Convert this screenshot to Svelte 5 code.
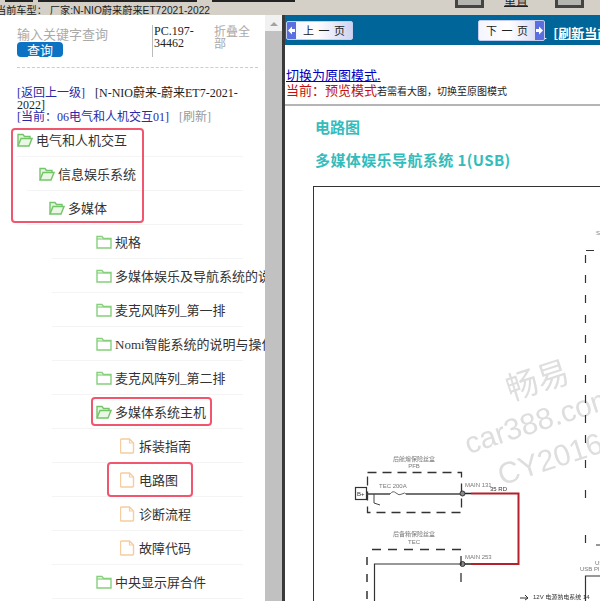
<script>
    const rows = [
        { name: "电气和人机交互", level: 1, icon: "open" },
        { name: "信息娱乐系统", level: 2, icon: "open" },
        { name: "多媒体", level: 3, icon: "open" },
        { name: "规格", level: 4, icon: "closed" },
        { name: "多媒体娱乐及导航系统的说明与操作", level: 4, icon: "closed" },
        { name: "麦克风阵列_第一排", level: 4, icon: "closed" },
        { name: "Nomi智能系统的说明与操作", level: 4, icon: "closed" },
        { name: "麦克风阵列_第二排", level: 4, icon: "closed" },
        { name: "多媒体系统主机", level: 4, icon: "open" },
        { name: "拆装指南", level: 5, icon: "doc" },
        { name: "电路图", level: 5, icon: "doc" },
        { name: "诊断流程", level: 5, icon: "doc" },
        { name: "故障代码", level: 5, icon: "doc" },
        { name: "中央显示屏合件", level: 4, icon: "closed" }
    ];

    // dash segments of the big box on the right of the diagram
    const dashes = [255, 275, 295, 315, 335, 355, 375, 395, 415, 435, 460, 490, 535];
</script>

<div class="page">
    <div class="topbar">
        <span class="tab t1"></span><span class="tab t2"></span><span class="tab t3"></span>
        <div class="carinfo">当前车型： 厂家:N-NIO蔚来蔚来ET72021-2022</div>
        <span class="tool b1"></span>
        <span class="tool-label">重置</span>
        <span class="tool b2"></span>
    </div>

    <div class="main">
        <aside class="side">
            <div class="search">
                <div class="search-left">
                    <div class="placeholder">输入关键字查询</div>
                    <button class="query">查询</button>
                </div>
                <div class="code">PC.197-34462</div>
                <div class="collapse">折叠全部</div>
            </div>

            <div class="crumbs">
                <span class="blue back">[返回上一级]</span>[N-NIO蔚来-蔚来ET7-2021-2022]<br />
                <span class="blue back">[当前：06电气和人机交互01]</span><span class="grey">[刷新]</span>
            </div>

            <ul class="tree">
                {#each rows as row}
                    <li class="row l{row.level}">
                        {#if row.icon === "doc"}
                            <svg class="ico" width="15" height="16" viewBox="0 0 15 16">
                                <path d="M1.500 1h8l4 4v9a1 1 0 0 1-1 1h-11a1 1 0 0 1-1-1v-12a1 1 0 0 1 1-1z" fill="#fff" stroke="#f5cd9e" stroke-width="1.400" />
                                <path d="M9.500 1v4h4" fill="none" stroke="#f5cd9e" stroke-width="1.200" />
                            </svg>
                        {:else if row.icon === "open"}
                            <svg class="ico" width="16" height="14" viewBox="0 0 16 14">
                                <path d="M1 12.500v-11h5l1.500 2h5.500v2" fill="#e6f5e0" stroke="#74c56a" stroke-width="1.400" />
                                <path d="M1 13h11l3-7.500h-11z" fill="#eaf7e4" stroke="#74c56a" stroke-width="1.400" />
                            </svg>
                        {:else}
                            <svg class="ico" width="16" height="14" viewBox="0 0 16 14">
                                <path d="M1 1.500h5l1.500 2h7.500v9.500h-14z" fill="#fff" stroke="#86d07c" stroke-width="1.400" />
                                <path d="M1 4h14" stroke="#86d07c" stroke-width="1.200" />
                            </svg>
                        {/if}
                        <span>{row.name}</span>
                    </li>
                {/each}
                <span class="mark m1"></span>
                <span class="mark m2"></span>
                <span class="mark m3"></span>
            </ul>
        </aside>

        <div class="scrollbar">
            <div class="arrow"></div>
            <div class="thumb"></div>
        </div>

        <section class="content">
            <nav class="pager">
                <div class="pgbtn prev">
                    <i class="cap"><svg width="7" height="9" viewBox="0 0 7 9"><path d="M0 4.500l4-4v2.500h3v3h-3v2.500z" fill="#fff" /></svg></i>
                    <b>上 一 页</b>
                </div>
                <div class="pgbtn next">
                    <b>下 一 页</b>
                    <i class="cap"><svg width="7" height="9" viewBox="0 0 7 9"><path d="M7 4.500l-4-4v2.500h-3v3h3v2.500z" fill="#fff" /></svg></i>
                </div>
                <a class="gap" href="#top">&nbsp;</a>
                <a class="refresh" href="#top">[刷新当前页面]</a>
            </nav>

            <div class="mode">
                <a class="switch" href="#top">切换为原图模式.</a>
                <div class="status"><span class="red">当前：预览模式</span><small>若需看大图，切换至原图模式</small></div>
            </div>

            <article class="doc">
                <h2>电路图</h2>
                <h3>多媒体娱乐导航系统 1(USB)</h3>
                <svg class="diagram" viewBox="313 186 287 415" width="287" height="415">
                    <rect x="313.500" y="186.500" width="400" height="500" fill="#fff" stroke="#333" />

                    <g class="soft">
                        <g class="wm" transform="rotate(-18 530 380)">
                            <text x="505" y="394" font-size="32">畅易</text>
                        </g>
                        <g class="wm" transform="rotate(-18 530 430)">
                            <text x="464" y="434" font-size="30">car388.com</text>
                            <text x="486" y="474" font-size="30">CY2016</text>
                        </g>

                        <text class="tiny c" x="414" y="461">后舱熔保险丝盒</text>
                        <text class="tiny c" x="414" y="468">PFB</text>
                        <text class="tiny" x="379" y="488">TEC 200A</text>
                        <text class="tiny" x="465" y="487">MAIN 131</text>
                        <text class="tiny dark" x="490" y="491">35 RD</text>
                        <text class="tiny c" x="414" y="536">后备箱保险丝盒</text>
                        <text class="tiny c" x="414" y="544">TEC</text>
                        <text class="tiny" x="465" y="559">MAIN 253</text>
                        <text class="tiny dark" x="533" y="599">12V 电源熟电系统 14</text>
                        <text class="tiny" x="596" y="235">S</text>
                        <text class="tiny" x="595" y="565">US</text>
                        <text class="tiny" x="580" y="571">USB Pl</text>

                        <rect x="367.500" y="472.500" width="94" height="40" fill="none" stroke="#333" stroke-width="1.300" stroke-dasharray="9 6" />
                        <rect x="355.500" y="487.500" width="11" height="12" fill="#fff" stroke="#333" stroke-width="1.200" />
                        <text class="tiny dark" x="357" y="496">B+</text>
                        <path d="M366 494h24M406 494h55" stroke="#444" stroke-width="1.300" fill="none" />
                        <path d="M390 494q3 -4 6 -1t6 1t4 0" stroke="#666" fill="none" />
                        <path d="M374 494v9l6 2" stroke="#444" fill="none" />
                        <circle cx="462.500" cy="493.500" r="2.500" fill="#888" stroke="#333" />
                        <circle cx="462.500" cy="564" r="2.500" fill="#888" stroke="#333" />
                        <path d="M465 493.500h6M465 564h6" stroke="#222" stroke-width="1.500" />
                        <path d="M471 493.500h47.500v70.500h-47.500" fill="none" stroke="#b3222c" stroke-width="2" />

                        <path d="M372 549.500h90" stroke="#333" stroke-width="1.300" stroke-dasharray="9 7" />
                        <path d="M367 557v44" stroke="#333" stroke-width="1.500" stroke-dasharray="8 9" />
                        <path d="M461 556v34" stroke="#333" stroke-width="1.300" stroke-dasharray="9 8" />
                        <path d="M461 564h-86.500v40" stroke="#333" stroke-width="1.200" fill="none" />

                        {#each dashes as y}
                            <path d="M585.500 {y}v8" stroke="#333" stroke-width="1.200" />
                        {/each}
                        <path d="M586 250.500h8M596 545h6" stroke="#333" stroke-width="1.200" />
                        <path d="M585.500 601v-25h20" stroke="#333" stroke-width="1.200" fill="none" />
                        <path d="M520 598h8l-3 -3M528 598l-3 2" stroke="#333" fill="none" />
                    </g>
                </svg>
            </article>
        </section>
    </div>
</div>

<style>
    :global(body) {
        margin: 0;
    }

    .page {
        width: 600px;
        height: 601px;
        overflow: hidden;
        background: #d4d0c8;
        display: flex;
        flex-direction: column;
        font-family: "Noto Sans CJK SC", sans-serif;
    }

    .topbar {
        position: relative;
        height: 15px;
        flex: none;
    }

    .carinfo {
        position: absolute;
        left: -4px;
        top: 5px;
        font: 10.2px/11px "Liberation Sans", "Noto Sans CJK SC", sans-serif;
        color: #222;
        white-space: nowrap;
    }

    .tab {
        position: absolute;
        top: 0;
        height: 2px;
        background: #222;
    }

    .t1 {
        left: 5px;
        width: 28px;
    }

    .t2 {
        left: 38px;
        width: 159px;
    }

    .t3 {
        left: 212px;
        width: 83px;
    }

    .tool {
        position: absolute;
        top: 0;
        width: 29px;
        height: 8px;
        background: #b5b5b0;
        border: 3px solid #444;
        border-top: 0;
        box-sizing: border-box;
    }

    .b1 {
        left: 455px;
    }

    .b2 {
        left: 555px;
    }

    .tool-label {
        position: absolute;
        left: 504px;
        top: -7px;
        font-size: 12px;
        line-height: 14px;
        text-decoration: underline;
        color: #222;
    }

    .main {
        flex: 1;
        display: flex;
        min-height: 0;
    }

    .side {
        width: 265px;
        flex: none;
        background: #fff;
        overflow: hidden;
    }

    .search {
        display: flex;
        align-items: flex-start;
        margin: 10px 7px 0 17px;
        padding-bottom: 10px;
        height: 32px;
        border-bottom: 1px dashed #ccc;
    }

    .search-left {
        width: 135px;
        flex: none;
    }

    .placeholder {
        font-size: 13px;
        line-height: 17px;
        color: #aaa;
    }

    .query {
        display: block;
        width: 46px;
        height: 15px;
        padding: 0;
        border: 0;
        border-radius: 4px;
        background: #0b72c4;
        color: #fff;
        font: 13px/15px "Noto Sans CJK SC", sans-serif;
    }

    .code {
        width: 46px;
        height: 32px;
        flex: none;
        padding-left: 1px;
        border-left: 1px solid #bbb;
        font: 12px/12px "Liberation Serif", serif;
        color: #222;
        word-break: break-word;
    }

    .collapse {
        margin-left: 14px;
        width: 37px;
        font-size: 12px;
        line-height: 12px;
        color: #aaa;
    }

    .crumbs {
        margin: 19px 20px 0 17px;
        height: 36px;
        font: 12px/12px "Liberation Serif", "Noto Sans CJK SC", serif;
        color: #222;
    }

    .blue {
        color: #2a2aa8;
    }

    .back {
        margin-right: 10px;
    }

    .grey {
        color: #999;
    }

    .tree {
        position: relative;
        width: 243px;
        margin: 0;
        padding: 0;
        list-style: none;
    }

    .row {
        height: 33px;
        display: flex;
        align-items: center;
        border-bottom: 1px solid #f4f4f4;
        white-space: nowrap;
        font: 13px "Liberation Serif", "Noto Sans CJK SC", serif;
        color: #333;
    }

    .ico {
        flex: none;
        margin-right: 3px;
    }

    .l1 {
        margin-left: 17px;
    }

    .l2 {
        margin-left: 27px;
        padding-left: 12px;
    }

    .l3 {
        margin-left: 27px;
        padding-left: 22px;
    }

    .l4 {
        margin-left: 52px;
        padding-left: 44px;
    }

    .l5 {
        margin-left: 52px;
        padding-left: 68px;
    }

    .l5 .ico {
        margin-right: 4px;
    }

    .mark {
        position: absolute;
        box-sizing: border-box;
        border: 2px solid #f0566e;
        border-radius: 4px;
    }

    .m1 {
        left: 11px;
        top: 5px;
        width: 133px;
        height: 95px;
    }

    .m2 {
        left: 91px;
        top: 274px;
        width: 121px;
        height: 29px;
    }

    .m3 {
        left: 107px;
        top: 339px;
        width: 86px;
        height: 35px;
    }

    .scrollbar {
        width: 17px;
        flex: none;
        background: #f1f1f1;
    }

    .arrow {
        width: 0;
        height: 0;
        margin: 7px auto 5px;
        border: 4px solid transparent;
        border-top: 0;
        border-bottom-color: #a3a3a3;
    }

    .thumb {
        height: 100%;
        background: #c1c1c1;
    }

    .content {
        flex: 1;
        min-width: 0;
        overflow: hidden;
        background: #fff;
        border-left: 3px solid #3a3a3a;
    }

    .pager {
        height: 30px;
        display: flex;
        align-items: center;
        padding-left: 1px;
        background: #006699;
        white-space: nowrap;
    }

    .pgbtn {
        box-sizing: border-box;
        display: flex;
        align-items: center;
        flex: none;
        height: 19px;
        width: 67px;
        border: 1px solid #c4ccf0;
        border-radius: 2px;
        overflow: hidden;
        background: linear-gradient(90deg, #f4f5ff, #fff 45%, #cfd3f0);
        color: #222;
    }

    .pgbtn b {
        flex: 1;
        font-weight: 400;
        font-size: 11px;
        word-spacing: 2px;
        text-align: center;
    }

    .cap {
        width: 9px;
        height: 100%;
        flex: none;
        display: flex;
        align-items: center;
        justify-content: center;
        background: #5a6ee0;
    }

    .next {
        height: 21px;
        margin-left: 125px;
    }

    .gap {
        font-size: 6px;
        color: #fff;
        margin-top: 8px;
    }

    .refresh {
        margin: 4px 0 0 7px;
        color: #fff;
        font-size: 13px;
        font-weight: 700;
    }

    .mode {
        height: 61px;
        box-sizing: border-box;
        padding-top: 22px;
        padding-left: 1px;
        border-bottom: 2px solid #b5b5b5;
        font-size: 13px;
        line-height: 16px;
    }

    .switch {
        color: #0000c0;
    }

    .red {
        color: #c01010;
    }

    .status {
        margin-top: -1px;
        white-space: nowrap;
    }

    small {
        font-size: 10px;
        color: #222;
    }

    .doc {
        padding: 10px 0 0 28px;
    }

    h2,
    h3 {
        margin: 0;
        padding-left: 2px;
        color: #33bcbc;
        font-weight: 700;
        font-family: "Noto Sans CJK SC", sans-serif;
        white-space: nowrap;
    }

    h2 {
        font-size: 15px;
        line-height: 22px;
    }

    h3 {
        margin-top: 11px;
        font-size: 15px;
        line-height: 22px;
        letter-spacing: 0.4px;
    }

    .diagram {
        display: block;
        margin-top: 15px;
    }

    .soft {
        filter: blur(0.35px);
    }

    .wm text {
        fill: #dedede;
        font-family: "Liberation Sans", "Noto Sans CJK SC", sans-serif;
    }

    .tiny {
        font: 6px "Liberation Sans", "Noto Sans CJK SC", sans-serif;
        fill: #777;
    }

    .dark {
        fill: #333;
    }

    .c {
        text-anchor: middle;
    }
</style>
